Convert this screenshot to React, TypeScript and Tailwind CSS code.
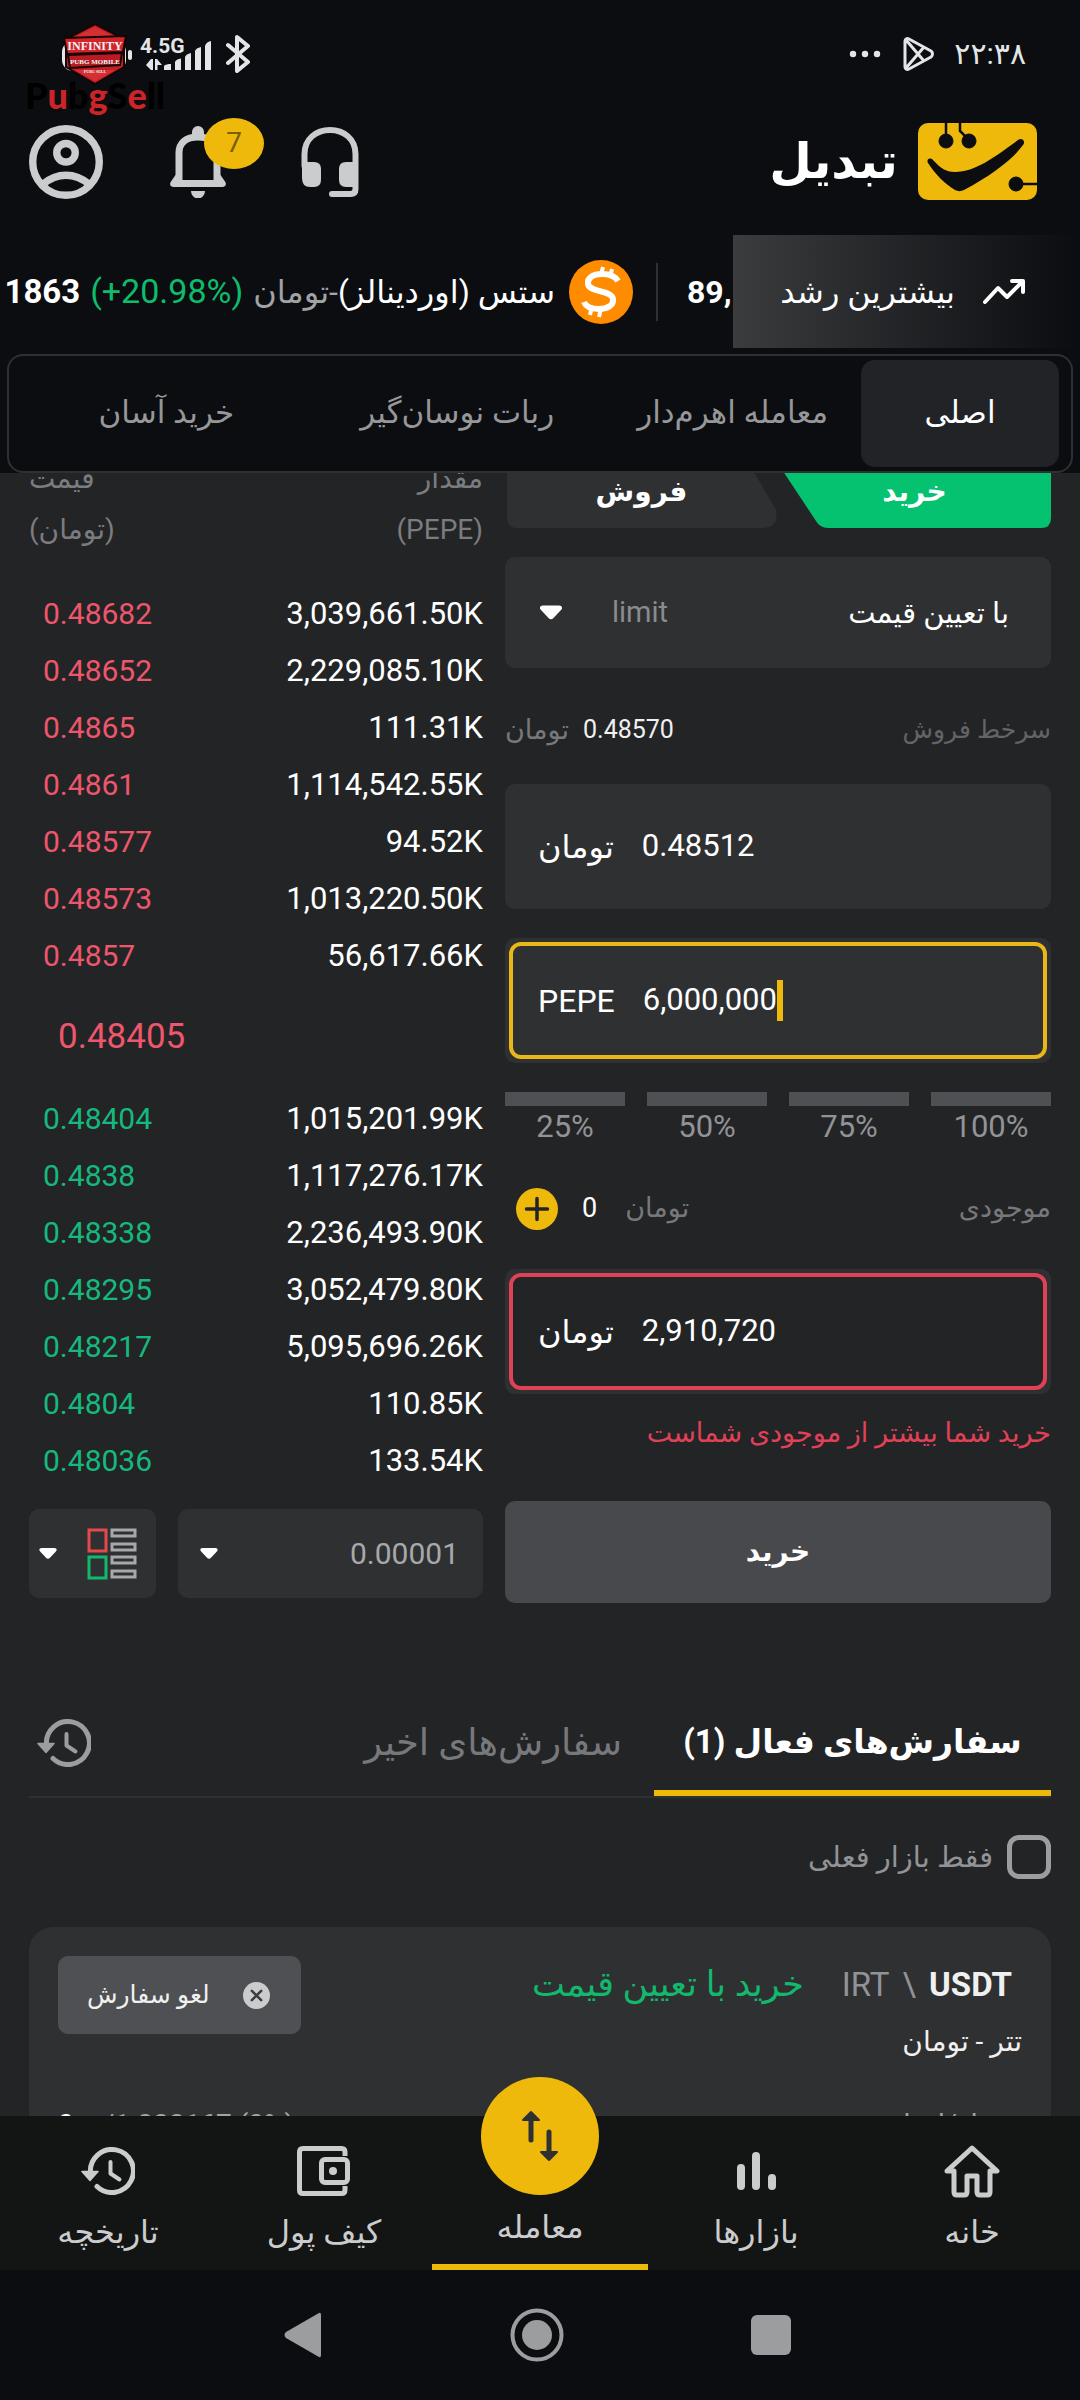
import type { ReactNode } from "react";

const sells: [string, string][] = [
  ["0.48682", "3,039,661.50K"],
  ["0.48652", "2,229,085.10K"],
  ["0.4865", "111.31K"],
  ["0.4861", "1,114,542.55K"],
  ["0.48577", "94.52K"],
  ["0.48573", "1,013,220.50K"],
  ["0.4857", "56,617.66K"],
];

const buys: [string, string][] = [
  ["0.48404", "1,015,201.99K"],
  ["0.4838", "1,117,276.17K"],
  ["0.48338", "2,236,493.90K"],
  ["0.48295", "3,052,479.80K"],
  ["0.48217", "5,095,696.26K"],
  ["0.4804", "110.85K"],
  ["0.48036", "133.54K"],
];

function HistoryIcon() {
  return (
    <svg width="54" height="48" viewBox="0 0 54 48" fill="none" stroke="currentColor" strokeWidth="5" strokeLinecap="round" strokeLinejoin="round">
      <path d="M9.500 26A21.500 21.500 0 1 1 16 39.500" />
      <path d="M1 24.500h16l-8 9z" fill="currentColor" strokeWidth="1.500" />
      <path d="M29.500 15v11.500l9 6" strokeWidth="4" />
    </svg>
  );
}

function Caret({ small = false }: { small?: boolean }) {
  return (
    <svg width={small ? 18 : 22} height={small ? 11 : 15} viewBox="0 0 22 14" className="shrink-0" aria-hidden="true">
      <path d="M3 0h16c3 0 4 2.500 2 4.500l-7.500 8c-1.500 1.600-3.500 1.600-5 0L1 4.500C-1 2.500 0 0 3 0z" fill="#fff" />
    </svg>
  );
}

function StatusBar() {
  return (
    <div className="relative flex h-[108px] items-center justify-between pl-[62px] pr-[54px] text-[#e4e5e6]">
      <div className="flex items-center gap-[13px]">
        <svg width="151" height="36" viewBox="0 0 151 36" fill="#e4e5e6" aria-hidden="true">
          <rect x="2" y="7" width="60" height="26" rx="9" fill="none" stroke="#e4e5e6" strokeWidth="4" />
          <rect x="66" y="14" width="4" height="10" rx="2" />
          <text x="78" y="17" fontSize="21" fontWeight="700" fontFamily="Roboto, sans-serif">4.5G</text>
          <path d="M84 29l5-6v11zM89 23h2v11h-2zM93 23h2.500v11H93zM95 23l5 6h-5z" />
          <path d="M102 30q0-1 5-2l2 0v6h-7zM113 26q1-3 6-3.500V34h-6zM123 21q1-3 6-4v17h-6zM133 15q1-3 6-4v23h-6zM143 10q1-4 6-5v29h-6z" />
        </svg>
        <svg width="24" height="40" viewBox="0 0 24 40" fill="none" stroke="#e4e5e6" strokeWidth="4" strokeLinecap="round" strokeLinejoin="round" aria-hidden="true">
          <path d="M2 11l20 17-11 9V3l11 9L2 29" />
        </svg>
      </div>
      <div className="flex items-center">
        <svg width="32" height="8" viewBox="0 0 32 8" fill="#e4e5e6" aria-hidden="true">
          <circle cx="4" cy="4" r="3.200" /><circle cx="16" cy="4" r="3.200" /><circle cx="28" cy="4" r="3.200" />
        </svg>
        <svg className="ml-[22px] mr-[20px]" width="31" height="34" viewBox="0 0 31 34" fill="none" stroke="#e4e5e6" strokeWidth="3" strokeLinejoin="round" aria-hidden="true">
          <path d="M2 4c0-2 2-3 4-2l22 12c2 1.500 2 4.500 0 6L6 32c-2 1-4 0-4-2zM3 3l18 21M3 31l18-21" />
        </svg>
        <span className="text-[30px] leading-8">۲۲:۳۸</span>
      </div>
      <div className="absolute left-[24px] top-[23px] flex w-[142px] flex-col items-center">
        <svg width="64" height="62" viewBox="0 0 64 62" aria-hidden="true">
          <path d="M32 1L61 16v28L32 61 3 44V16z" fill="#c02026" stroke="#160405" strokeWidth="2" />
          <path d="M32 4L54 15H10zM12 47h40L32 58z" fill="#e0383c" opacity=".65" />
          <path d="M1 15l62-2-3 16L4 31z" fill="#d2242a" stroke="#160405" strokeWidth="2" />
          <path d="M5 32l54-2-2 12-50 3z" fill="#b81c22" stroke="#160405" strokeWidth="2" />
          <g fill="#f0f4f5" textAnchor="middle" fontFamily="Liberation Serif, serif" fontWeight="700">
            <text x="32" y="27" fontSize="12">INFINITY</text>
            <text x="32" y="41" fontSize="7">PUBG MOBILE</text>
            <text x="32" y="50" fontSize="4">PUBG SELL</text>
          </g>
        </svg>
        <p className="-mt-[9px] font-[Lato] text-[36px] font-black leading-[38px] text-black">
          P<span className="text-[#cc2427]">u</span>b<span className="text-[#cc2427]">g</span>S<span className="text-[#cc2427]">e</span>ll
        </p>
      </div>
    </div>
  );
}

function AppHeader() {
  return (
    <div className="flex h-[127px] items-start justify-between pl-[29px] pr-[43px] pt-[15px]">
      <div className="flex h-[77px] items-center">
        <button aria-label="حساب کاربری">
          <svg width="74" height="74" viewBox="2 2 20 20" fill="none" stroke="#cbccce" strokeWidth="2">
            <circle cx="12" cy="12" r="9" />
            <circle cx="12" cy="9.500" r="2.500" />
            <path d="M5.800 18c1.900-1.600 3.900-2.400 6.200-2.400s4.300.8 6.200 2.400" />
          </svg>
        </button>
        <button className="relative ml-[67px]" aria-label="اعلان‌ها">
          <svg width="56" height="72" viewBox="0 0 56 72">
            <rect x="22" width="12" height="14" rx="6" fill="#cbccce" />
            <path d="M9 54V27c0-10 7-16 19-16s19 6 19 16v27" fill="none" stroke="#cbccce" strokeWidth="7" />
            <path d="M5.500 49L1 55.500C-1 58.500.5 61 3.500 61h49c3 0 4.500-2.500 2.500-5.500L50.500 49H44v5H12v-5zM21 65h14a7 7.500 0 0 1-14 0z" fill="#cbccce" />
          </svg>
          <span className="absolute left-[34px] top-[-8px] flex h-[51px] w-[60px] items-center justify-center rounded-[50%] bg-[#efb90b] text-[28px] text-[#7a5f0b]">7</span>
        </button>
        <button className="ml-[75px]" aria-label="پشتیبانی">
          <svg width="58" height="72" viewBox="0 0 58 72">
            <path d="M3.500 40V28C3.500 13 15 4 29 4s25.500 9 25.500 24v35q0 5-5 5H31" fill="none" stroke="#cbccce" strokeWidth="6" strokeLinecap="round" />
            <path d="M1 36h12q7 0 7 7v11q0 7-7 7h-4q-8 0-8-9zM57 36H45q-7 0-7 7v11q0 7 7 7h12z" fill="#cbccce" />
          </svg>
        </button>
      </div>
      <div className="flex items-center gap-[20px]">
        <h1 className="text-[49px] font-bold leading-[64px] text-white">تبدیل</h1>
        <svg width="119" height="77" viewBox="0 0 119 77" aria-hidden="true">
          <rect width="119" height="77" rx="10" fill="#efb90b" />
          <g fill="#0b0d10" stroke="#0b0d10">
            <circle cx="28" cy="18" r="7" /><circle cx="51" cy="18" r="7" /><circle cx="98" cy="61" r="7" />
            <path d="M28 0v14M42 0v8l7 7M98 61h21" fill="none" strokeWidth="2.500" />
            <path d="M15 37c8 9 14 12 22 12 20 0 40-15 63-32 4-3 8 1 5 5C95 36 74 52 46 67c-3 1.500-6 1.500-9 0C27 61 17 51 10 40c-2-4 2-6 5-3z" stroke="none" />
          </g>
        </svg>
      </div>
    </div>
  );
}

function Ticker() {
  return (
    <div dir="rtl" className="flex h-[113px] items-center overflow-hidden whitespace-nowrap text-[32px] text-white">
      <div className="flex h-full w-[347px] shrink-0 items-center gap-[28px] bg-linear-to-r from-[#3b3c3e] to-[#0b0d10] pr-[55px]">
        <svg width="42" height="26" viewBox="0 0 42 26" fill="none" stroke="#fff" strokeWidth="4" strokeLinecap="round" strokeLinejoin="round" aria-hidden="true">
          <path d="M2 23L15 9l9 9L38 4M29 2h11v11" />
        </svg>
        <span>بیشترین رشد</span>
      </div>
      <div className="flex w-[77px] shrink-0 justify-end border-l-2 border-[#2f3032] pl-[29px] leading-[58px]" dir="rtl">
        <span className="w-[44px] font-bold" dir="ltr">89,</span>
      </div>
      <svg className="mr-[23px] shrink-0" width="64" height="64" viewBox="0 0 64 64" aria-hidden="true">
        <circle cx="32" cy="32" r="32" fill="#ff8c00" />
        <g fill="none" stroke="#fff" strokeWidth="6">
          <path d="M49 21c-3-5-9-7-16-7-9 0-15 4-14 10 2 9 24 6 25 15 1 7-7 10-14 10-8 0-13-2-15-7" />
          <path d="M34 7l-2 8M43 9l-2 8M23 46l-2 9M32 48l-2 9" strokeWidth="4" />
        </g>
      </svg>
      <span className="mr-[14px] shrink-0">ستس (اوردینالز)<span className="text-[#a2a3a5]">-تومان</span></span>
      <span className="mr-[10px] shrink-0 text-[34px] text-[#0ebd6c]" dir="ltr">(+20.98%)</span>
      <span className="mr-[10px] shrink-0 text-[33px] font-bold" dir="ltr">1863</span>
    </div>
  );
}

function ModeTabs() {
  return (
    <div className="px-[7px] pt-[6px]">
      <div dir="rtl" role="tablist" className="flex h-[119px] items-center rounded-[16px] border-2 border-[#2f3032] p-[5px] pr-[12px] text-[31px] text-[#96979a]">
        <button role="tab" aria-selected="true" className="h-[107px] w-[198px] rounded-[14px] bg-[#222326] text-white">اصلی</button>
        <button role="tab" className="mr-[33px] h-full">معامله اهرم‌دار</button>
        <button role="tab" className="mr-[83px] h-full">ربات نوسان‌گیر</button>
        <button role="tab" className="mr-[126px] h-full">خرید آسان</button>
      </div>
    </div>
  );
}

function BookRows({ rows, tone }: { rows: [string, string][]; tone: string }) {
  return (
    <tbody>
      {rows.map(([price, amount]) => (
        <tr key={price} className="h-[57px]">
          <td className={`pl-[14px] text-[30px] ${tone}`}>{price}</td>
          <td className="text-right text-white">{amount}</td>
        </tr>
      ))}
    </tbody>
  );
}

function OrderBook() {
  return (
    <div className="flex min-w-0 flex-col">
      <table className="w-full text-[31px] leading-[40px]">
        <thead>
          <tr className="align-top text-[28px] leading-[51px] text-[#7b7c7f]">
            <th className="h-[132px] text-left font-normal">قیمت<br />(تومان)</th>
            <th className="text-right font-normal">مقدار<br />(PEPE)</th>
          </tr>
        </thead>
        <BookRows rows={sells} tone="text-[#ee566c]" />
        <tbody>
          <tr className="h-[106px]">
            <td colSpan={2} className="pl-[29px] text-[35px] text-[#ee566c]">0.48405</td>
          </tr>
        </tbody>
        <BookRows rows={buys} tone="text-[#16b97d]" />
      </table>
      <div className="mt-[20px] flex h-[89px] gap-[22px]">
        <button aria-label="نمایش دفتر سفارش" className="flex w-[127px] items-center justify-between rounded-[10px] bg-[#2f3032] pl-[10px] pr-[19px]">
          <Caret small />
          <svg width="50" height="52" viewBox="0 0 50 52" fill="none" strokeWidth="3" aria-hidden="true">
            <path d="M2 2h17v21H2z" stroke="#e44a4c" />
            <path d="M2 29h17v21H2z" stroke="#12b86b" />
            <path d="M25 2h23v6H25zM25 16h23v6H25zM25 29h23v6H25zM25 43h23v6H25z" stroke="#a7a8aa" />
          </svg>
        </button>
        <label className="flex flex-1 items-center rounded-[10px] bg-[#2f3032] pl-[22px] pr-[24px]">
          <Caret small />
          <select aria-label="دقت قیمت" className="min-w-0 flex-1 appearance-none bg-transparent text-right text-[30px] text-[#a7a8aa] [text-align-last:right]">
            <option>0.00001</option>
          </select>
        </label>
      </div>
    </div>
  );
}

type FieldProps = { id: string; unit: string; value: string; frame?: string; focused?: boolean };

function Field({ id, unit, value, frame = "border-transparent", focused = false }: FieldProps) {
  return (
    <div className="rounded-[10px] bg-[#2f3032] p-[4px]">
      <label htmlFor={id} className={`flex h-[117px] items-center gap-[28px] rounded-[12px] border-4 pl-[25px] text-[31px] text-white ${frame}`}>
        <span className="text-[32px] leading-[44px]">{unit}</span>
        <span className="flex min-w-0 flex-1 items-center">
          <input id={id} dir="ltr" defaultValue={value} className="min-w-0 bg-transparent outline-none [field-sizing:content]" />
          {focused && <span className="h-[41px] w-[6px] bg-[#efb90b]" />}
        </span>
      </label>
    </div>
  );
}

function OrderForm() {
  return (
    <form className="flex min-w-0 flex-col" onSubmit={(e) => e.preventDefault()}>
      <div dir="rtl" className="relative flex h-[75px] pt-[3px] text-[28px] font-bold text-white">
        <svg className="absolute inset-0 h-full w-full" viewBox="0 0 546 75" preserveAspectRatio="none" aria-hidden="true">
          <path d="M266 0H534q12 0 12 12v53q0 10-10 10H323q-8 0-12-7z" fill="#05c270" />
          <path d="M12 0H238L271 57q3 18-14 18H12Q2 75 2 65V10Q2 0 12 0z" fill="#2f3032" />
        </svg>
        <button type="button" className="relative flex-1">خرید</button>
        <button type="button" className="relative flex-1">فروش</button>
      </div>

      <label className="mt-[29px] flex h-[111px] items-center rounded-[10px] bg-[#2f3032] pl-[35px] pr-[42px]">
        <Caret />
        <span className="ml-[50px] text-[29px] text-[#8a8b8e]">limit</span>
        <select dir="rtl" aria-label="نوع سفارش" className="min-w-0 flex-1 appearance-none bg-transparent text-[29px] leading-[60px] text-white">
          <option>با تعیین قیمت</option>
        </select>
      </label>

      <div dir="rtl" className="flex h-[116px] items-center justify-between pt-[8px] text-[25px] text-[#636467]">
        <span>سرخط فروش</span>
        <span className="flex items-center gap-[14px]"><span className="text-[#f0f0f0]">0.48570</span><span className="text-[27px] text-[#77787b]">تومان</span></span>
      </div>

      <Field id="price" unit="تومان" value="0.48512" />
      <div className="mt-[29px]">
        <Field id="amount" unit="PEPE" value="6,000,000" frame="border-[#e9b717]" focused />
      </div>

      <div className="mt-[29px] grid grid-cols-4 gap-[22px]">
        {["25%", "50%", "75%", "100%"].map((p) => (
          <button key={p} type="button" className="text-[31px] leading-[42px] text-[#929396]">
            <span className="block h-[14px] bg-[#4f5053]" />
            {p}
          </button>
        ))}
      </div>

      <div className="flex h-[121px] items-center justify-between text-[27px] text-[#77787b]">
        <div className="flex items-center">
          <button type="button" aria-label="افزایش موجودی" className="ml-[11px]">
            <svg width="42" height="42" viewBox="0 0 42 42">
              <circle cx="21" cy="21" r="21" fill="#efb90b" />
              <path d="M21 10.500v21M10.500 21h21" stroke="#232426" strokeWidth="3.500" strokeLinecap="round" />
            </svg>
          </button>
          <span className="ml-[24px] text-white">0</span>
          <span className="ml-[28px]">تومان</span>
        </div>
        <span>موجودی</span>
      </div>

      <Field id="total" unit="تومان" value="2,910,720" frame="border-[#e14157] bg-[#232426]" />
      <p dir="rtl" className="mt-[18px] whitespace-nowrap text-[27px] leading-[42px] text-[#e14157]">خرید شما بیشتر از موجودی شماست</p>
      <button type="submit" className="mt-[47px] h-[102px] rounded-[10px] bg-[#48494c] text-[28px] font-bold text-white">خرید</button>
    </form>
  );
}

function Orders() {
  return (
    <section className="mt-[77px]">
      <div dir="rtl" className="flex h-[118px] items-stretch border-b-2 border-[#303133] text-[37px] text-[#77787b]">
        <button className="w-[397px] whitespace-nowrap border-b-[6px] border-[#efb90b] pt-[13px] text-[33px] font-bold text-white">سفارش‌های فعال (1)</button>
        <button className="mr-[32px] whitespace-nowrap pt-[9px]">سفارش‌های اخیر</button>
        <button aria-label="تاریخچه سفارش‌ها" className="mr-auto ml-[8px] pt-[9px] text-[#9c9d9f]"><HistoryIcon /></button>
      </div>
      <label dir="rtl" className="mt-[37px] flex items-center gap-[14px] text-[29px] leading-[44px] text-[#929396]">
        <input type="checkbox" className="size-[44px] appearance-none rounded-[12px] border-[5px] border-[#9c9d9f]" />
        فقط بازار فعلی
      </label>
      <article dir="rtl" className="mt-[48px] rounded-[24px] bg-[#2f3032] px-[29px] pb-[40px] pt-[29px]">
        <div className="flex items-start">
          <div>
            <div className="flex h-[58px] items-center pr-[10px] text-[33px]">
              <span dir="ltr" className="flex gap-[13px] text-[#929396]">IRT <span>\</span> <b className="text-[#f0f0f0]">USDT</b></span>
              <span className="mr-[38px] whitespace-nowrap text-[35px] text-[#12b86b]">خرید با تعیین قیمت</span>
            </div>
            <p className="pt-[6px] text-[28px] leading-[44px] text-[#f0f0f0]">تتر - تومان</p>
          </div>
          <button className="mr-auto flex h-[78px] w-[243px] items-center justify-between rounded-[10px] bg-[#4f5053] pl-[29px] pr-[31px] text-[25px] text-[#f0f0f0]">
            <svg width="27" height="27" viewBox="0 0 26 26" aria-hidden="true">
              <circle cx="13" cy="13" r="13" fill="#cbccce" />
              <path d="M8.500 8.500l9 9M17.500 8.500l-9 9" stroke="#3b3c3e" strokeWidth="2.500" strokeLinecap="round" />
            </svg>
            لغو سفارش
          </button>
        </div>
        <div className="mt-[41px] flex items-center justify-between text-[28px] leading-[40px] text-[#a2a3a5]">
          <span>مقدار/انجام شده</span>
          <span dir="ltr" className="flex gap-[29px]"><span className="text-white">0</span><span>/1.233167 (0%)</span></span>
        </div>
      </article>
    </section>
  );
}

function NavItem({ label, children }: { label: string; children: ReactNode }) {
  return (
    <a href="#" className="flex flex-col items-center justify-start pt-[28px]">
      <span className="flex h-[54px] items-center">{children}</span>
      <span className="mt-[12px] text-[32px] leading-[44px]">{label}</span>
    </a>
  );
}

function BottomNav() {
  return (
    <nav dir="rtl" className="relative grid h-[154px] shrink-0 grid-cols-5 bg-[#131514] text-[#cbccce]">
      <NavItem label="خانه">
        <svg width="56" height="54" viewBox="0 0 56 54" fill="none" stroke="currentColor" strokeWidth="5" strokeLinejoin="round">
          <path d="M28 4L53 27h-7v21q0 3-3 3h-7q-3 0-3-3V32H23v16q0 3-3 3h-7q-3 0-3-3V27H3z" />
        </svg>
      </NavItem>
      <NavItem label="بازارها">
        <svg width="39" height="40" viewBox="0 0 39 40" stroke="currentColor" strokeWidth="8" strokeLinecap="round">
          <path d="M4 17v18M19 5v30M35 27v8" />
        </svg>
      </NavItem>
      <a href="#" aria-current="page" className="flex flex-col items-center border-b-[6px] border-[#efb90b]">
        <span className="-mt-[39px] flex size-[118px] shrink-0 items-center justify-center rounded-full bg-[#efb90b]">
          <svg width="38" height="52" viewBox="0 0 38 52" fill="#2f3032" stroke="#2f3032" strokeLinecap="round" strokeLinejoin="round">
            <path d="M10 8v22M28 22v22" strokeWidth="5" />
            <path d="M10 2l8 8H2zM28 50l8-8H20z" strokeWidth="2" />
          </svg>
        </span>
        <span className="mt-[10px] text-[32px] leading-[44px]">معامله</span>
      </a>
      <NavItem label="کیف پول">
        <svg width="54" height="50" viewBox="0 0 54 50" fill="none" stroke="currentColor" strokeWidth="5">
          <path d="M48 10V6q0-3.500-3.500-3.500H6Q2.500 2.500 2.500 6v38q0 3.500 3.500 3.500h38.500q3.500 0 3.500-3.500v-4" />
          <rect x="24.500" y="13.500" width="26" height="23" rx="3.500" />
          <circle cx="36" cy="25" r="4" fill="currentColor" stroke="none" />
        </svg>
      </NavItem>
      <NavItem label="تاریخچه"><HistoryIcon /></NavItem>
    </nav>
  );
}

function SystemNav() {
  return (
    <div className="flex h-[130px] shrink-0 items-center bg-[#0b0d10] pl-[284px] pr-[289px] text-[#9c9d9f]">
      <div className="flex w-full items-center justify-between">
        <button aria-label="Back">
          <svg width="38" height="46" viewBox="0 0 38 46" fill="currentColor"><path d="M35 1q2-1 2 2v40q0 3-2 2L2 26q-3-3 0-6z" /></svg>
        </button>
        <button aria-label="Home">
          <svg width="54" height="54" viewBox="0 0 54 54" fill="none" stroke="currentColor"><circle cx="27" cy="27" r="24.500" strokeWidth="4" /><circle cx="27" cy="27" r="15" fill="currentColor" stroke="none" /></svg>
        </button>
        <button aria-label="Recents"><span className="block size-[40px] rounded-[6px] bg-current" /></button>
      </div>
    </div>
  );
}

export default function App() {
  return (
    <div className="flex h-screen flex-col overflow-hidden bg-[#232426] font-[Roboto,'DejaVu_Sans',sans-serif]">
      <header className="shrink-0 bg-[#0b0d10]">
        <StatusBar />
        <AppHeader />
        <Ticker />
        <ModeTabs />
      </header>
      <main className="min-h-0 flex-1 overflow-y-auto px-[29px] [scrollbar-width:none]">
        <div className="-mt-[20px] grid grid-cols-[454fr_546fr] gap-[22px]">
          <OrderBook />
          <OrderForm />
        </div>
        <Orders />
      </main>
      <BottomNav />
      <SystemNav />
    </div>
  );
}
